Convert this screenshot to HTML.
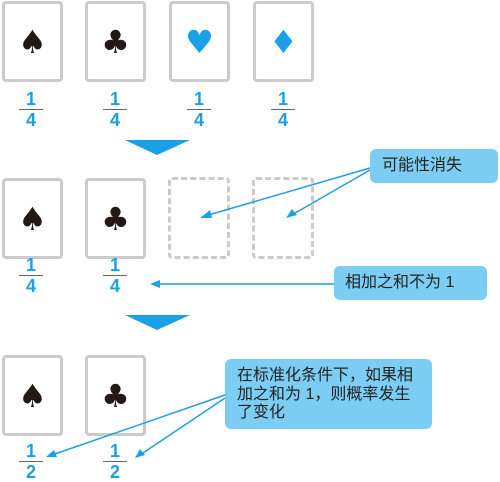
<!DOCTYPE html>
<html><head><meta charset="utf-8"><style>
body{margin:0;width:500px;height:476px;background:#fff;position:relative;overflow:hidden;font-family:"Liberation Sans","Noto Sans CJK SC",sans-serif}
.c{position:absolute;width:55px;height:75px;border:3px solid #cbcbcb;border-radius:4px;background:#fff}
.d{position:absolute;width:56px;height:76px;border:3px dashed #cbcbcb;border-radius:4px}
.s{position:absolute;left:0;right:0;top:20px;text-align:center;font-family:"DejaVu Sans",sans-serif;font-size:32px;line-height:36px;color:#231815}
.b{color:#19a0e6}
.f{position:absolute;width:24px;text-align:center;color:#19a0e6;font-weight:bold;font-size:18px;line-height:15px}
.f i{display:block;height:1px;background:#666;margin:2px 0 3px}
.l{position:absolute;background:#7ccdf3;border-radius:6px;color:#222;font-size:16px;box-sizing:border-box;line-height:18.5px}
</style></head><body>
<div class="c" style="left:2px;top:1px"><div class="s">♠</div></div>
<div class="c" style="left:85px;top:1px"><div class="s">♣</div></div>
<div class="c" style="left:169px;top:1px"><div class="s b">♥</div></div>
<div class="c" style="left:253px;top:1px"><div class="s b">♦</div></div>
<div class="f" style="left:19px;top:92px">1<i></i>4</div>
<div class="f" style="left:103px;top:92px">1<i></i>4</div>
<div class="f" style="left:187px;top:92px">1<i></i>4</div>
<div class="f" style="left:271px;top:92px">1<i></i>4</div>

<div class="c" style="left:2px;top:178px"><div class="s">♠</div></div>
<div class="c" style="left:85px;top:178px"><div class="s">♣</div></div>
<div class="d" style="left:168px;top:177px"></div>
<div class="d" style="left:252px;top:177px"></div>
<div class="f" style="left:19px;top:258px">1<i></i>4</div>
<div class="f" style="left:103px;top:258px">1<i></i>4</div>

<div class="c" style="left:2px;top:355px"><div class="s">♠</div></div>
<div class="c" style="left:85px;top:355px"><div class="s">♣</div></div>
<div class="f" style="left:19px;top:444px">1<i></i>2</div>
<div class="f" style="left:103px;top:444px">1<i></i>2</div>

<div class="l" style="left:370px;top:149px;width:128px;height:34px;padding:8px 0 0 12px">可能性消失</div>
<div class="l" style="left:334px;top:266px;width:153px;height:34px;padding:8px 0 0 11px">相加之和不为 1</div>
<div class="l" style="left:225px;top:359px;width:207px;height:70px;padding:8px 0 0 12px">在标准化条件下，如果相<br>加之和为 1，则概率发生<br>了变化</div>

<svg width="500" height="476" style="position:absolute;left:0;top:0">
<polygon points="125,140 190,140 157,155" fill="#19a0e6"/>
<polygon points="125,315 190,315 157,330" fill="#19a0e6"/>
<g stroke="#19a0e6" stroke-width="1.5" fill="#19a0e6">
<line x1="370" y1="168" x2="205" y2="216"/><polygon points="200,218 210,210 212,218" stroke="none"/>
<line x1="370" y1="170" x2="290" y2="216"/><polygon points="286,218 292,209 297,215" stroke="none"/>
<line x1="334" y1="284" x2="155" y2="284"/><polygon points="150,284 160,280 160,288" stroke="none"/>
<line x1="225" y1="395" x2="52" y2="455"/><polygon points="46,457 54,450 57,457" stroke="none"/>
<line x1="225" y1="398" x2="140" y2="455"/><polygon points="135,458 140,449 145,455" stroke="none"/>
</g></svg>
</body></html>
